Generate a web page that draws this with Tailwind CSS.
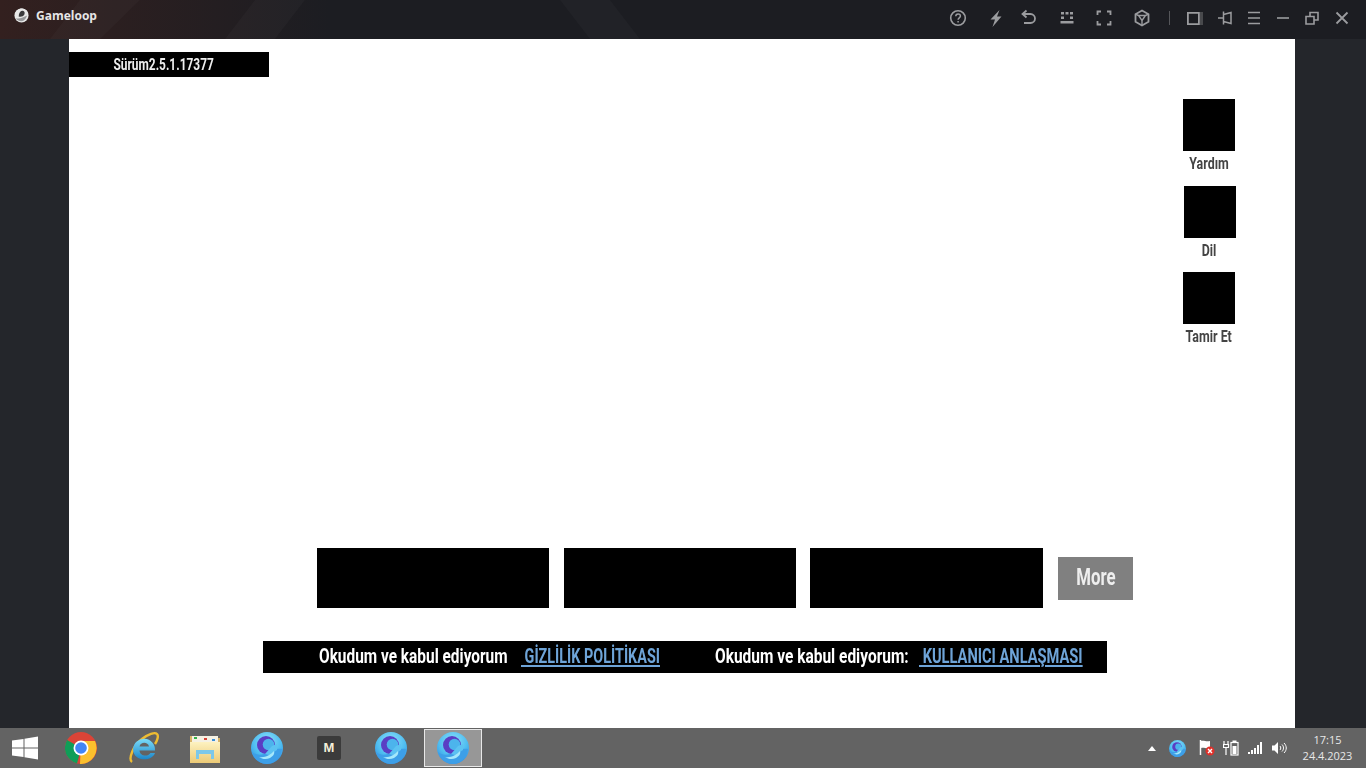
<!doctype html>
<html>
  <head>
    <meta charset="UTF-8">
    <title>Gameloop</title>
    <script src="https://cdn.jsdelivr.net/npm/@tailwindcss/browser@4"></script>
  </head>
  <body class="w-[1366px] h-[768px] overflow-hidden flex flex-col font-['Roboto',sans-serif] bg-[#24262b]">
    <!-- shared gradients and the gameloop ball -->
    <svg class="absolute w-0 h-0">
      <defs>
        <radialGradient id="gl" cx="50%" cy="30%" r="75%"><stop offset="0" stop-color="#8fe2fa"/><stop offset="0.6" stop-color="#4dbcf0"/><stop offset="1" stop-color="#2f86e0"/></radialGradient>
        <linearGradient id="ie" x1="0" y1="0" x2="0" y2="1"><stop offset="0" stop-color="#7bdcf9"/><stop offset="1" stop-color="#1c86c9"/></linearGradient>
        <linearGradient id="fold" x1="0" y1="0" x2="0" y2="1"><stop offset="0" stop-color="#fdf2c0"/><stop offset="1" stop-color="#ecca76"/></linearGradient>
        <symbol id="gameloop" viewBox="0 0 32 32">
          <circle cx="16" cy="16" r="16" fill="url(#gl)"/>
          <path d="M1 20c5 4 11 3 16 0s10-4 14-3c-1 9-8 15-15 15C9 32 3 27 1 20z" fill="#3d9fe8"/>
          <circle cx="15" cy="13" r="9" fill="#5a3ec4"/>
          <circle cx="17.500" cy="12.500" r="5.800" fill="#4cb4ec"/>
          <path d="M21 14l5-2v6l-8 5-4-1z" fill="#5cc2f2"/>
          <path d="M8 25c6 1 11-2 15-6 1 3-1 5-4 7-4 2-8 1-11-1z" fill="#a5e8fb"/>
        </symbol>
      </defs>
    </svg>

    <!-- title bar -->
    <header class="relative h-[39px] shrink-0 flex items-center bg-[#1c1d22] overflow-hidden">
      <svg class="absolute inset-0" width="1366" height="39" viewBox="0 0 1366 39">
        <defs><linearGradient id="red" x1="0" x2="1" y1="0" y2="0"><stop offset="0" stop-color="#33201f"/><stop offset="1" stop-color="#1c1d22"/></linearGradient></defs>
        <rect width="330" height="39" fill="url(#red)"/>
        <path d="M50 39 80 0h60L100 39zM225 39 255 0h50l-30 39zM560 0h50l30 39h-50z" fill="#ffffff" opacity="0.025"/>
      </svg>
      <svg class="relative ml-[14px] -mt-[8px]" width="15" height="15" viewBox="0 0 16 16"><circle cx="8" cy="8" r="7.500" fill="#e8e8e8"/><path d="M1 10c4 1 7-1 9-3s3-2 5-1c0-3-3-5.500-7-5.500C5 .5 2 3 1 6z" fill="#e8e8e8"/><path d="M5 9c2 1 5 0 6-2 1-2 0-4-2-4S5 5 5 9z" fill="#3a3a3c"/><path d="M2 11c4 1 8-1 12-3-1 3-3 6-6 6-3 0-5-1-6-3z" fill="#97989a"/></svg>
      <span class="relative ml-[7px] text-[12px] font-bold text-[#e6e6e6] font-['Open_Sans',sans-serif] -mt-[8px]">Gameloop</span>
      <div class="relative ml-auto mr-[14px] flex items-center text-[#9b9c9f] -mt-[3px]">
        <svg width="20" height="20" viewBox="0 0 20 20" fill="none" stroke="currentColor" stroke-width="1.600"><circle cx="10" cy="10" r="7.300"/><path d="M7.800 8.200c0-3 4.600-3 4.600-.2 0 1.800-2.300 1.800-2.300 3.700" stroke-width="1.500"/><path d="M10.100 13.100v1.400" stroke-width="1.500"/></svg>
        <svg class="ml-[18px]" width="20" height="20" viewBox="0 0 20 20" fill="currentColor"><path d="M13.500 2 4.500 11.500H9L6.500 19 15.500 8.500H11z"/></svg>
        <svg class="ml-[13px]" width="20" height="20" viewBox="0 0 20 20" fill="none" stroke="currentColor" stroke-width="1.800"><path d="M7.500 2.500 3.500 6l4 3.500"/><path d="M4 6h7.500a4.500 4.500 0 0 1 0 9H5"/></svg>
        <svg class="ml-[18px]" width="20" height="20" viewBox="0 0 20 20" fill="currentColor"><path d="M4 4h3v2.500H4zM8.500 4h3v2.500h-3zM13 4h3v2.500h-3zM4 8.500h3v2.500H4zM13 8.500h3v2.500h-3zM3.500 13h13v2.500h-13z"/></svg>
        <svg class="ml-[17px]" width="20" height="20" viewBox="0 0 20 20" fill="none" stroke="currentColor" stroke-width="1.800"><path d="M7 3.500H3.500V7M13 3.500h3.500V7M7 16.500H3.500V13M13 16.500h3.500V13"/></svg>
        <svg class="ml-[18px]" width="20" height="20" viewBox="0 0 20 20" fill="none" stroke="currentColor" stroke-width="1.800"><path d="M10 2.500 16.500 6.200v7.600L10 17.500 3.500 13.800V6.200z"/><path d="M6.500 7.500h7L10 12.500zM10 12.500v5M3.500 6.200l3 1.300M16.500 6.200l-3 1.300" stroke-width="1.400"/></svg>
        <div class="ml-[17px] w-px h-[14px] bg-[#55565a]"></div>
        <svg class="ml-[15px]" width="20" height="20" viewBox="0 0 20 20" fill="none"><path d="M2.900 4.900h11v11.200h-11z" stroke="currentColor" stroke-width="1.800"/><path d="M15 4h3v13h-3z" fill="#48494c"/></svg>
        <svg class="ml-[10px]" width="20" height="20" viewBox="0 0 20 20" fill="none" stroke="currentColor" stroke-width="1.500"><path d="M8.500 3.500v13M8.500 6.500 16 4.500v11l-7.500-2M3 10h5.500"/></svg>
        <svg class="ml-[9px]" width="20" height="20" viewBox="0 0 20 20" fill="none" stroke="currentColor" stroke-width="1.600"><path d="M4 4.500h12M4 10h12M4 15.500h12"/></svg>
        <svg class="ml-[9px]" width="20" height="20" viewBox="0 0 20 20" fill="none" stroke="currentColor" stroke-width="1.600"><path d="M4 10h12"/></svg>
        <svg class="ml-[9px]" width="20" height="20" viewBox="0 0 20 20" fill="none" stroke="currentColor" stroke-width="1.600"><path d="M4 8.500h8v7.500H4zM8 8V4.500h8V12h-3.500"/></svg>
        <svg class="ml-[10px]" width="20" height="20" viewBox="0 0 20 20" fill="none" stroke="currentColor" stroke-width="1.800"><path d="m4.500 4.500 11 11M15.500 4.500l-11 11"/></svg>
      </div>
    </header>

    <!-- emulator area -->
    <div class="flex-1 flex px-[69px] pr-[71px] bg-[#24262b]">
      <main class="w-[1226px] bg-white flex flex-col">
        <div class="flex justify-between items-start">
          <div class="mt-[13px] w-[200px] h-[25px] bg-black flex items-center justify-center text-[#eee] font-bold text-[17px] overflow-hidden"><span class="-ml-[11px] scale-x-[0.7] whitespace-nowrap blur-[0.3px]">Sürüm2.5.1.17377</span></div>
          <div class="mt-[60px] mr-[60px] w-[52px] flex flex-col items-center text-[#444] font-bold text-[17px]">
            <div class="w-[52px] h-[52px] bg-black"></div>
            <div class="h-[24px] leading-[24px] scale-x-[0.73] whitespace-nowrap blur-[0.3px]">Yardım</div>
            <div class="mt-[11px] ml-[2px] w-[52px] h-[52px] bg-black"></div>
            <div class="h-[24px] leading-[24px] scale-x-[0.73] whitespace-nowrap blur-[0.3px]">Dil</div>
            <div class="mt-[10px] w-[52px] h-[52px] bg-black"></div>
            <div class="h-[24px] leading-[24px] scale-x-[0.73] whitespace-nowrap blur-[0.3px]">Tamir Et</div>
          </div>
        </div>
        <div class="mt-[200px] ml-[248px] flex items-center h-[60px]">
          <div class="w-[232px] h-[60px] bg-black"></div>
          <div class="ml-[15px] w-[232px] h-[60px] bg-black"></div>
          <div class="ml-[14px] w-[233px] h-[60px] bg-black"></div>
          <div class="ml-[15px] w-[75px] h-[43px] bg-[#808080] flex items-center justify-center text-[#eee] font-bold text-[23px]"><span class="scale-x-[0.73] blur-[0.3px]">More</span></div>
        </div>
        <div class="mt-[33px] ml-[194px] w-[844px] h-[32px] bg-black flex items-center text-[21px] font-bold text-white whitespace-nowrap">
          <div class="ml-[56px] w-[189px]"><span class="inline-block origin-left scale-x-[0.734] blur-[0.3px]">Okudum ve kabul ediyorum</span></div>
          <div class="ml-[13px] w-[140px] text-[#6ea4d8]"><span class="inline-block origin-left scale-x-[0.685] underline underline-offset-2 blur-[0.3px]">&nbsp;GİZLİLİK POLİTİKASI</span></div>
          <div class="ml-[54px] w-[194px]"><span class="inline-block origin-left scale-x-[0.737] blur-[0.3px]">Okudum ve kabul ediyorum:</span></div>
          <div class="ml-[10px] w-[164px] text-[#6ea4d8]"><span class="inline-block origin-left scale-x-[0.697] underline underline-offset-2 blur-[0.3px]">&nbsp;KULLANICI ANLAŞMASI</span></div>
        </div>
      </main>
    </div>

    <!-- taskbar -->
    <footer class="h-[40px] shrink-0 bg-[#636363] flex items-center text-white">
      <div class="w-[50px] flex justify-center">
        <svg width="26" height="26" viewBox="0 0 26 26" fill="#fff"><path d="M0 5.500 11.500 4v8.500H0zM12.500 3.800 26 1.500v11H12.500zM0 13.500h11.500V22L0 20.500zM12.500 13.500H26v11l-13.500-2.300z"/></svg>
      </div>
      <div class="w-[62px] flex justify-center">
        <svg width="32" height="32" viewBox="0 0 32 32"><circle cx="16" cy="16" r="16" fill="#db4437"/><path d="M16 16 2.100 8A16 16 0 0 0 12 31.500z" fill="#0f9d58"/><path d="M16 9h14a16 16 0 0 1-15 23z" fill="#fbc02d"/><circle cx="16" cy="16" r="7.500" fill="#fff"/><circle cx="16" cy="16" r="5.800" fill="#4285f4"/></svg>
      </div>
      <div class="w-[62px] flex justify-center">
        <svg width="32" height="32" viewBox="0 0 32 32" fill="none"><path d="M5 30C1 27 6 14 15 7c6-5 13-7 15-5 2 2 0 7-2 10" stroke="#eebc32" stroke-width="2.400"/><path d="M6 17a11 11 0 0 1 22 1.500H12.500c.5 6 8.500 6.500 11 2.500H28c-3 9-22 9-22-4zm6.500-2.500h9.500c-1-5-8.500-5-9.500 0z" fill="url(#ie)"/></svg>
      </div>
      <div class="w-[62px] flex justify-center">
        <svg width="32" height="30" viewBox="0 0 32 30"><path d="M1 3h14l2 2h14v23H1z" fill="#d9b568"/><rect x="3" y="3" width="26" height="8" fill="#f5f1e3"/><rect x="5" y="4" width="3" height="2" fill="#35b24a"/><rect x="15" y="5" width="3" height="2" fill="#d8453a"/><rect x="23" y="6" width="3" height="2" fill="#3a8fd8"/><path d="M1 9h30v21H1z" fill="url(#fold)"/><path d="M7 17h18v9h-3v-5H10v5H7z" fill="#7cc8ea"/></svg>
      </div>
      <div class="w-[62px] flex justify-center"><svg width="32" height="32"><use href="#gameloop"/></svg></div>
      <div class="w-[62px] flex justify-center">
        <div class="w-[24px] h-[24px] rounded-[2px] bg-[#3b3b3b] flex items-center justify-center text-[13px] font-bold text-[#f4eed8] font-['Liberation_Sans',sans-serif]">M</div>
      </div>
      <div class="w-[62px] flex justify-center"><svg width="32" height="32"><use href="#gameloop"/></svg></div>
      <div class="w-[62px] flex justify-center">
        <div class="w-[58px] h-[38px] border border-[#e8e8e8] bg-[#979797] flex items-center justify-center"><svg width="32" height="32"><use href="#gameloop"/></svg></div>
      </div>
      <div class="ml-auto flex items-center">
        <svg width="8" height="5" viewBox="0 0 8 5" fill="#fff"><path d="M0 5 4 0l4 5z"/></svg>
        <svg class="ml-[13px]" width="17" height="17"><use href="#gameloop"/></svg>
        <svg class="ml-[13px]" width="16" height="18" viewBox="0 0 16 18"><path d="M1.500 1v15" stroke="#fff" stroke-width="1.500"/><path d="M2 2c3-1 5 1 9 0v7c-4 1-6-1-9 0z" fill="#fff"/><circle cx="11" cy="12" r="4.500" fill="#e0302a"/><path d="m9 10 4 4m0-4-4 4" stroke="#fff" stroke-width="1.400"/></svg>
        <svg class="ml-[8px]" width="16" height="16" viewBox="0 0 16 16" fill="none" stroke="#fff"><path d="M1 1v3M5 1v3M0.500 4.500h5v3h-5zM3 7.500V15" stroke-width="1.200"/><rect x="8" y="2.500" width="7" height="12.500" stroke-width="1.200"/><rect x="10" y="1" width="3" height="1.500" fill="#fff"/><rect x="9.500" y="6" width="4" height="8" fill="#fff" stroke="none"/></svg>
        <svg class="ml-[9px]" width="15" height="12" viewBox="0 0 15 12" fill="#fff"><path d="M0 10h2v2H0zM3 8h2v4H3zM6 6h2v6H6zM9 3h2v9H9zM12 0h2v12h-2z"/></svg>
        <svg class="ml-[8px]" width="16" height="16" viewBox="0 0 16 16" fill="none" stroke="#fff"><path d="M1 5.500h2.500L7 2v12l-3.500-3.500H1z" fill="#fff" stroke="none"/><path d="M9 6c1 1 1 3 0 4M11 4.500c2 2 2 5 0 7M13 3c3 3 3 7 0 10" stroke-width="1"/></svg>
        <div class="ml-[11px] w-[59px] mr-[9px] text-[11px] leading-[16px] text-center text-[#e8e8e8] font-['Open_Sans',sans-serif]">
          <div>17:15</div>
          <div>24.4.2023</div>
        </div>
      </div>
    </footer>
  </body>
</html>
